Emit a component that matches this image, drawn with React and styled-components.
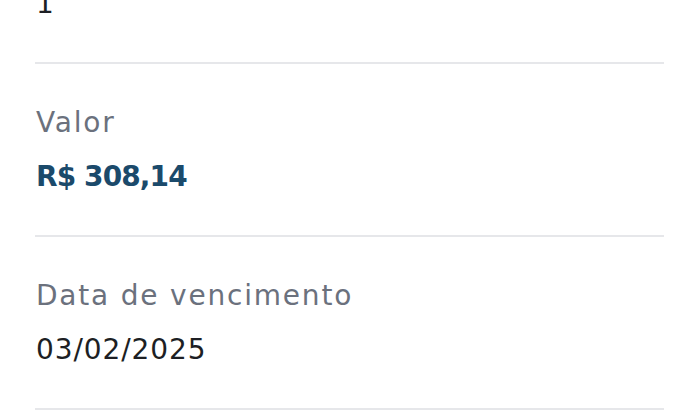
import React from 'react';
import styled, { createGlobalStyle } from 'styled-components';

const GlobalStyle = createGlobalStyle`
  html, body {
    margin: 0;
    padding: 0;
    background: #ffffff;
    overflow: hidden;
  }
  body {
    font-family: "DejaVu Sans", "Liberation Sans", sans-serif;
  }
`;

// the list is scrolled, so the first row sits partly above the top edge
const DetailList = styled.div`
  display: flex;
  flex-direction: column;
  margin-top: -109px;
  padding: 0 36px 0 35px;
`;

const DetailRow = styled.div`
  display: flex;
  flex-direction: column;
  gap: 14px;
  padding: 39px 0 38px 1px;
  border-bottom: 2px solid #e6e7ea;
`;

const Label = styled.span`
  font-size: 28px;
  line-height: 40px;
  color: #6b717d;
  letter-spacing: 1.8px;
`;

const Value = styled.span`
  font-size: 28px;
  line-height: 40px;
  font-weight: ${(p) => (p.$highlight ? 700 : 400)};
  color: ${(p) => (p.$highlight ? '#1b4a6b' : '#1d1f24')};
  letter-spacing: ${(p) => (p.$highlight ? '-0.9px' : '0.9px')};
`;

const details = [
  { label: 'Parcela', value: '1' },
  { label: 'Valor', value: 'R$ 308,14', highlight: true },
  { label: 'Data de vencimento', value: '03/02/2025' },
];

const App = () => (
  <>
    <GlobalStyle />
    <DetailList>
      {details.map((item) => (
        <DetailRow key={item.label}>
          <Label>{item.label}</Label>
          <Value $highlight={item.highlight}>{item.value}</Value>
        </DetailRow>
      ))}
    </DetailList>
  </>
);

export default App;
